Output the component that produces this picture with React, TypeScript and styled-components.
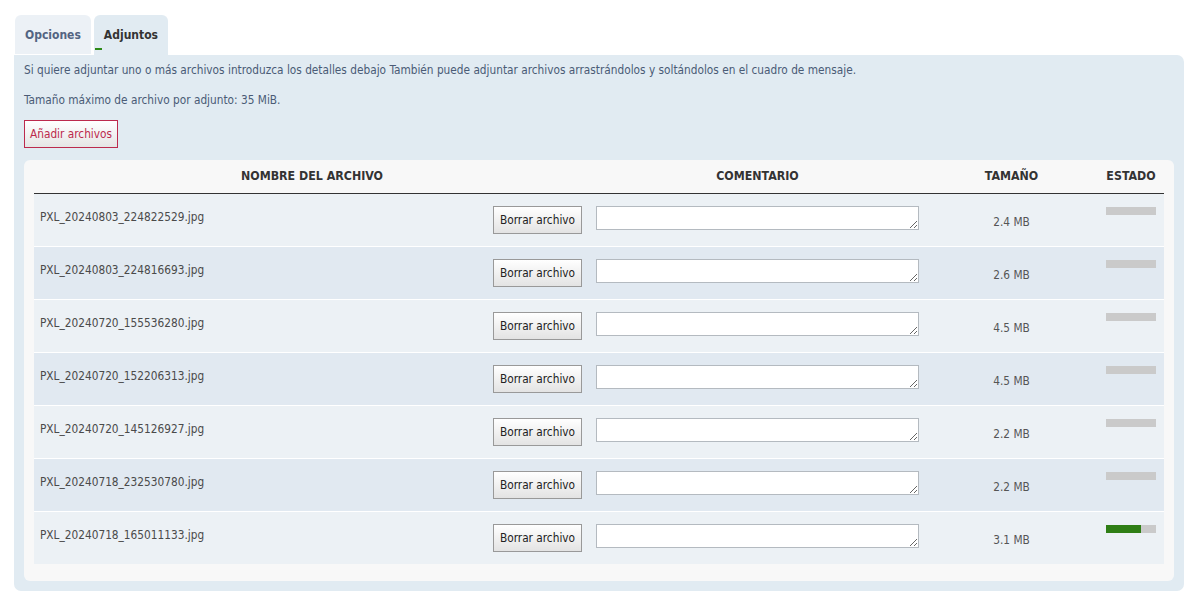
import React from 'react';
import styled, { createGlobalStyle } from 'styled-components';

interface IFile {
  name: string;
  size: string;
  progress: number;
}

const files: IFile[] = [
  { name: 'PXL_20240803_224822529.jpg', size: '2.4 MB', progress: 0 },
  { name: 'PXL_20240803_224816693.jpg', size: '2.6 MB', progress: 0 },
  { name: 'PXL_20240720_155536280.jpg', size: '4.5 MB', progress: 0 },
  { name: 'PXL_20240720_152206313.jpg', size: '4.5 MB', progress: 0 },
  { name: 'PXL_20240720_145126927.jpg', size: '2.2 MB', progress: 0 },
  { name: 'PXL_20240718_232530780.jpg', size: '2.2 MB', progress: 0 },
  { name: 'PXL_20240718_165011133.jpg', size: '3.1 MB', progress: 70 },
];

const GlobalStyle = createGlobalStyle`
  body {
    margin: 0;
    background: #fff;
    font-family: "DejaVu Sans Condensed", "DejaVu Sans", Verdana, sans-serif;
    font-size: 11.75px;
  }
`;

const Page = styled.div`
  padding: 15px 11px 14px 14px;
`;

const Tabs = styled.ul`
  display: flex;
  gap: 3px;
  list-style: none;
  margin: 0;
  padding: 0 0 0 1px;
`;

const Tab = styled.li<{ $active?: boolean }>`
  position: relative;
  height: 40px;
  padding: 0 10px;
  display: flex;
  align-items: center;
  border-radius: 6px 6px 0 0;
  background: ${(p) => (p.$active ? '#e1ebf2' : '#ecf1f6')};
  color: ${(p) => (p.$active ? '#333' : '#536482')};
  font-weight: bold;
  font-size: 12px;
  box-shadow: ${(p) => (p.$active ? 'none' : 'inset 0 -1px 0 #fff')};
  &::after {
    content: '';
    display: ${(p) => (p.$active ? 'block' : 'none')};
    position: absolute;
    left: 1px;
    top: 33px;
    width: 7px;
    height: 2px;
    background: #2d8a17;
  }
`;

const Panel = styled.div`
  background: #e1ebf2;
  border-radius: 0 7px 7px 7px;
  padding: 8px 10px 10px 10px;
  color: #4a5b76;
`;

const Note = styled.p`
  margin: 0 0 16px 0;
  line-height: 14px;
`;

const AddButton = styled.button`
  font: inherit;
  color: #bc2a4d;
  border: 1px solid #bc2a4d;
  background: linear-gradient(#ffffff, #e5e5e5);
  height: 28px;
  padding: 0 5px;
  margin: -3px 0 12px 0;
`;

const Box = styled.div`
  background: #f8f8f8;
  border-radius: 6px;
  padding: 0 10px 17px 10px;
`;

const Table = styled.table`
  width: 100%;
  border-collapse: collapse;
  color: #4a4a4a;
`;

const Head = styled.th`
  height: 33px;
  padding: 0;
  font-size: 12.3px;
  font-weight: bold;
  color: #333;
  text-transform: uppercase;
  text-align: center;
  border-bottom: 1px solid #333;
  box-sizing: border-box;
`;

const Row = styled.tr<{ $alt: boolean }>`
  height: 53px;
  background: ${(p) => (p.$alt ? '#e1e9f1' : '#ecf1f5')};
  border-top: 1px solid #fff;
  &:first-child {
    border-top: none;
  }
`;

const NameCell = styled.td`
  padding: 15px 8px 0 6px;
  vertical-align: top;
`;

const NameInner = styled.div`
  display: flex;
  justify-content: space-between;
  align-items: flex-start;
`;

const FileName = styled.span`
  line-height: 16px;
`;

const DeleteButton = styled.button`
  font: inherit;
  color: #222;
  height: 28px;
  width: 89px;
  padding: 0;
  margin-top: -3px;
  border: 1px solid #999;
  background: linear-gradient(#ffffff, #e3e3e3);
`;

const CommentCell = styled.td`
  padding: 0 6px;
  vertical-align: middle;
`;

const Comment = styled.textarea`
  display: block;
  width: 323px;
  height: 24px;
  box-sizing: border-box;
  border: 1px solid #b4bac0;
  background: #fff;
  margin-top: -4px;
  resize: vertical;
`;

const SizeCell = styled.td`
  padding: 4px 0 0 0;
  text-align: center;
  vertical-align: middle;
  color: #555;
`;

const StatusCell = styled.td`
  vertical-align: top;
  padding: 13px 8px 0 8px;
`;

const Bar = styled.div`
  width: 50px;
  height: 8px;
  background: #cacaca;
`;

const Fill = styled.div`
  height: 100%;
  background: #2f7e15;
`;

export default function App() {
  return (
    <Page>
      <GlobalStyle />
      <Tabs>
        <Tab>Opciones</Tab>
        <Tab $active>Adjuntos</Tab>
      </Tabs>
      <Panel>
        <Note>
          Si quiere adjuntar uno o más archivos introduzca los detalles debajo También puede
          adjuntar archivos arrastrándolos y soltándolos en el cuadro de mensaje.
        </Note>
        <Note>Tamaño máximo de archivo por adjunto: 35 MiB.</Note>
        <AddButton>Añadir archivos</AddButton>
        <Box>
          <Table>
            <colgroup>
              <col style={{ width: 556 }} />
              <col style={{ width: 335 }} />
              <col style={{ width: 173 }} />
              <col style={{ width: 66 }} />
            </colgroup>
            <thead>
              <tr>
                <Head>Nombre del archivo</Head>
                <Head>Comentario</Head>
                <Head>Tamaño</Head>
                <Head>Estado</Head>
              </tr>
            </thead>
            <tbody>
              {files.map((f, i) => (
                <Row key={f.name} $alt={i % 2 === 1}>
                  <NameCell>
                    <NameInner>
                      <FileName>{f.name}</FileName>
                      <DeleteButton>Borrar archivo</DeleteButton>
                    </NameInner>
                  </NameCell>
                  <CommentCell>
                    <Comment />
                  </CommentCell>
                  <SizeCell>{f.size}</SizeCell>
                  <StatusCell>
                    <Bar>
                      <Fill style={{ width: `${f.progress}%` }} />
                    </Bar>
                  </StatusCell>
                </Row>
              ))}
            </tbody>
          </Table>
        </Box>
      </Panel>
    </Page>
  );
}
